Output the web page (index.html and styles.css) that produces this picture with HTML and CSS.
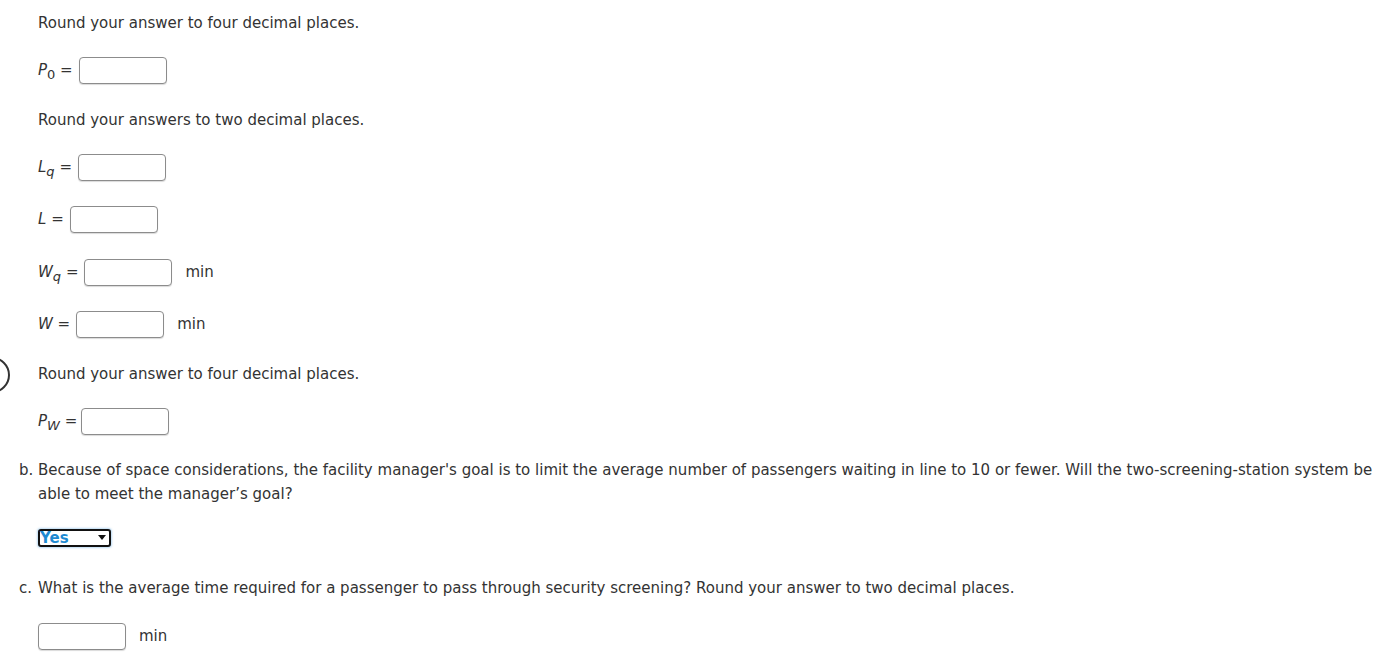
FILE: index.html
```html
<!DOCTYPE html>
<html>
<head>
<meta charset="utf-8">
<link rel="stylesheet" href="styles.css">
</head>
<body>
<div class="page">
  <div class="edge-circle"></div>
  <div class="content">
    <p class="txt t1">Round your answer to four decimal places.</p>
    <div class="row r-after-text"><span class="lbl"><i>P</i><sub>0</sub> =</span><span class="box"></span></div>

    <p class="txt t-after-row">Round your answers to two decimal places.</p>
    <div class="row r-after-text"><span class="lbl"><i>L</i><sub><i>q</i></sub> =</span><span class="box"></span></div>
    <div class="row r-after-row"><span class="lbl"><i>L</i> =</span><span class="box"></span></div>
    <div class="row r-after-row r-wq"><span class="lbl"><i>W</i><sub><i>q</i></sub> =</span><span class="box"></span><span class="unit">min</span></div>
    <div class="row r-after-row"><span class="lbl"><i>W</i> =</span><span class="box"></span><span class="unit">min</span></div>

    <p class="txt t-after-row">Round your answer to four decimal places.</p>
    <div class="row r-after-text"><span class="lbl lbl-pw"><i>P</i><sub><i>W</i></sub> =</span><span class="box"></span></div>

    <div class="q t-after-row t-b"><span class="qn">b.</span><span class="qt">Because of space considerations, the facility manager's goal is to limit the average number of passengers waiting in line to 10 or fewer. Will the two-screening-station system be able to meet the manager’s goal?</span></div>
    <div class="row sel-row"><span class="sel"><span class="sel-text">Yes</span><span class="arrow"></span></span></div>

    <div class="q t-after-sel"><span class="qn">c.</span><span class="qt">What is the average time required for a passenger to pass through security screening? Round your answer to two decimal places.</span></div>
    <div class="row r-after-text r-last"><span class="box"></span><span class="unit">min</span></div>
  </div>
</div>
</body>
</html>
```
FILE: styles.css
```css
html, body {
  margin: 0;
  padding: 0;
  background: #ffffff;
}
body {
  font-family: "DejaVu Sans", Verdana, sans-serif;
  font-size: 15px;
  color: #333333;
}
.page {
  position: relative;
  width: 1391px;
  height: 672px;
  overflow: hidden;
}
.edge-circle {
  position: absolute;
  left: -26px;
  top: 357px;
  width: 32px;
  height: 32px;
  border: 2px solid #333;
  border-radius: 50%;
}
.content {
  padding: 11px 0 0 38px;
}
.txt {
  margin: 0;
  line-height: 24px;
  height: 24px;
}
.t1 { margin-top: 0; }
.t-after-row { margin-top: 24px; }
.t-b { margin-top: 23px; }
.t-after-sel { margin-top: 24px; }
.row {
  display: flex;
  align-items: center;
  height: 28px;
}
.r-after-text { margin-top: 21px; }
.r-after-row { margin-top: 24px; }
.r-wq { margin-top: 25px; }
.r-last { margin-top: 22px; }
.lbl {
  white-space: nowrap;
  margin-right: 6px;
  font-size: 15px;
}
.lbl-pw { margin-right: 4px; }
.lbl i { font-style: italic; }
.lbl sub {
  font-size: 13px;
  vertical-align: -4px;
  line-height: 0;
}
.box {
  display: inline-block;
  width: 88px;
  height: 27px;
  box-sizing: border-box;
  border: 1px solid #8c8c8c;
  border-radius: 4px;
  box-shadow: 0 1px 1px rgba(0,0,0,0.15);
  background: #fff;
}
.unit {
  margin-left: 13px;
}
.q {
  display: flex;
  margin-left: -19px;
  line-height: 24px;
  padding-right: 10px;
}
.qn {
  width: 19px;
  flex: none;
}
.qt {
  flex: 1;
}
.sel-row {
  margin-top: 18px;
}
.sel {
  position: relative;
  display: inline-flex;
  align-items: center;
  box-sizing: border-box;
  width: 73px;
  height: 18px;
  border: 2px solid #111;
  border-radius: 3px;
  box-shadow: 0 0 2px 1px rgba(60,150,220,0.35);
  background: #fff;
}
.sel-text {
  color: #1e8ad2;
  font-weight: bold;
  font-size: 15px;
  line-height: 14px;
}
.arrow {
  position: absolute;
  right: 3px;
  top: 4px;
  width: 0;
  height: 0;
  border-left: 4px solid transparent;
  border-right: 4px solid transparent;
  border-top: 5px solid #111;
}
```
